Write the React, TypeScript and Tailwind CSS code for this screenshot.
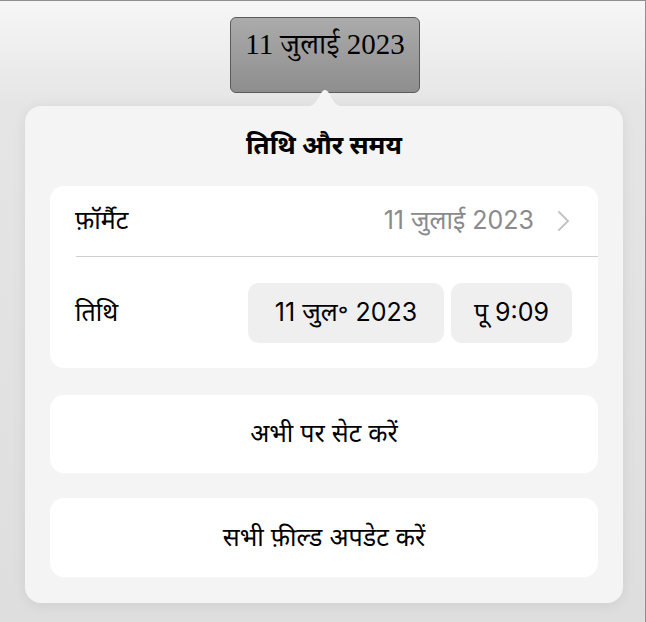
import React from "react";

const sans = "font-['Inter','Noto_Sans_Devanagari','Noto_Sans',sans-serif]";

function Chevron() {
  return (
    <svg width="13" height="22" viewBox="0 0 13 22" fill="none">
      <polyline points="2,2 11,11 2,20" stroke="#c4c4c8" strokeWidth="2" strokeLinecap="round" strokeLinejoin="round" />
    </svg>
  );
}

function ActionButton({ label }: { label: string }) {
  return (
    <button className="w-full flex items-center justify-center bg-white rounded-[14px] text-[25px] text-black">
      {label}
    </button>
  );
}

export default function App() {
  return (
    <div
      className={`w-[646px] h-[622px] overflow-hidden border-t border-r border-[#8f8f8f] bg-[linear-gradient(to_bottom,#f6f6f6_0px,#e5e5e5_105px,#dedede_100%)] ${sans}`}
    >
      {/* tooltip with the inserted date */}
      <div className="flex justify-center pt-[16px] pl-[5px]">
        <div className="w-[190px] h-[76px] rounded-[6px] border border-[#5a5a5a] bg-[linear-gradient(to_bottom,#ababab,#8e8e8e)] flex justify-center pt-[9px]">
          <span className="font-['Liberation_Serif','Noto_Serif_Devanagari',serif] text-[29px] leading-[34px] text-black">11 जुलाई 2023</span>
        </div>
      </div>

      {/* popover */}
      <div className="relative mt-[13px] ml-[25px] w-[598px] h-[497px] rounded-[16px] bg-[#f4f4f4] px-[25px] shadow-[0_2px_14px_rgba(0,0,0,0.07)] flex flex-col">
        <svg className="absolute left-[279px] top-[-20px]" width="42" height="21" viewBox="0 0 42 21">
          <path d="M0 21 C9 21 12 17 16 9 Q21 -1 26 9 C30 17 33 21 42 21 Z" fill="#f4f4f4" />
        </svg>

        <div className="h-[80px] pb-[4px] flex items-center justify-center">
          <h1 className="text-[26px] font-bold text-black">तिथि और समय</h1>
        </div>

        <div className="h-[182px] bg-white rounded-[14px] flex flex-col">
          <div className="h-[70px] flex items-center pl-[25px] pr-[28px]">
            <span className="text-[25px] text-black">फ़ॉर्मैट</span>
            <span className="ml-auto text-[25px] text-[#8a8a8e]">11 जुलाई 2023</span>
            <span className="ml-[23px] flex items-center">
              <Chevron />
            </span>
          </div>
          <div className="ml-[26px] h-px bg-[#cfcfd2]" />
          <div className="flex-1 flex items-center pl-[25px] pr-[26px]">
            <span className="text-[25px] text-black">तिथि</span>
            <div className="ml-auto flex gap-[7px]">
              <div className="h-[60px] w-[196px] rounded-[11px] bg-[#efeff0] flex items-center justify-center text-[25px] text-black">
                11 जुल॰ 2023
              </div>
              <div className="h-[60px] w-[121px] rounded-[11px] bg-[#efeff0] flex items-center justify-center text-[25px] text-black">
                पू 9:09
              </div>
            </div>
          </div>
        </div>

        <div className="mt-[27px] h-[78px] flex">
          <ActionButton label="अभी पर सेट करें" />
        </div>
        <div className="mt-[25px] h-[79px] flex">
          <ActionButton label="सभी फ़ील्ड अपडेट करें" />
        </div>
      </div>
    </div>
  );
}
